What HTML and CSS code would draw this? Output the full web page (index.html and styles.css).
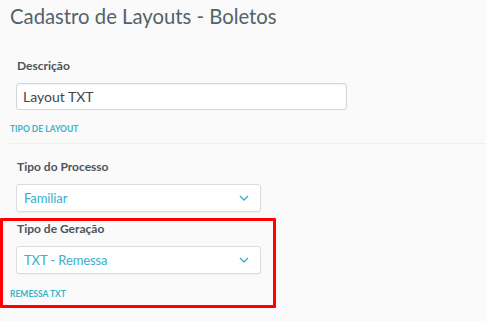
FILE: index.html
```html
<!DOCTYPE html>
<html lang="pt-BR">
<head>
  <meta charset="UTF-8" />
  <meta name="viewport" content="width=device-width, initial-scale=1" />
  <title>Cadastro de Layouts - Boletos</title>
  <link rel="stylesheet" href="styles.css">
</head>
<body>
  <main class="page">
    <h1 class="page-title">Cadastro de Layouts - Boletos</h1>

    <div class="field">
      <label for="descricao">Descrição</label>
      <input type="text" id="descricao" class="input-text" value="Layout TXT" />
    </div>
    <div class="section-title">TIPO DE LAYOUT</div>

    <hr class="divider" />

    <div class="field">
      <label>Tipo do Processo</label>
      <div class="select">
        <span>Familiar</span>
        <svg class="chevron" width="10" height="6" viewBox="0 0 10 6"><path d="M1 1l4 4 4-4" fill="none" stroke="#3aaecb" stroke-width="1.4"/></svg>
      </div>
    </div>

    <div class="highlight-group">
      <div class="field">
        <label>Tipo de Geração</label>
        <div class="select">
          <span>TXT - Remessa</span>
          <svg class="chevron" width="10" height="6" viewBox="0 0 10 6"><path d="M1 1l4 4 4-4" fill="none" stroke="#3aaecb" stroke-width="1.4"/></svg>
        </div>
      </div>
      <div class="section-title">REMESSA TXT</div>
      <div class="annotation"></div>
    </div>
  </main>
</body>
</html>
```

FILE: styles.css
```css
body {
  font-family: Lato, 'Open Sans', sans-serif;
  background-color: #fafafa;
  margin: 0;
  padding: 0;
  color: #4a5358;
}

.page {
  width: 486px;
  height: 321px;
  overflow: hidden;
}

.page-title {
  font-size: 20.3px;
  line-height: 24px;
  font-weight: 400;
  color: #52626a;
  margin: 4px 0 0 10px;
}

.field {
  padding-left: 16px;
}

.field label {
  display: block;
  font-size: 12px;
  line-height: 16px;
  font-weight: 700;
  color: #4c5559;
  padding-left: 1px;
}

.page-title + .field {
  margin-top: 30px;
}

.input-text {
  display: block;
  box-sizing: border-box;
  width: 331px;
  height: 27px;
  margin-top: 9px;
  padding: 0 6px;
  border: 1px solid #d6d6d6;
  border-radius: 3px;
  background: #fff;
  box-shadow: inset 0 1px 2px rgba(0, 0, 0, 0.06);
  font-family: inherit;
  font-size: 14px;
  color: #3f4448;
}

.section-title {
  font-size: 8.5px;
  line-height: 12px;
  font-weight: 700;
  color: #39b3c8;
  margin: 13px 0 0 10px;
}

.divider {
  border: none;
  border-top: 1px solid #efefef;
  margin: 8px 0 0 9px;
}

.divider + .field {
  margin-top: 15px;
}

.select {
  box-sizing: border-box;
  width: 245px;
  height: 28px;
  margin-top: 9px;
  padding: 0 11px 0 7px;
  display: flex;
  align-items: center;
  justify-content: space-between;
  border: 1px solid #dcdcdc;
  border-radius: 3px;
  background: #fff;
  box-shadow: 0 1px 1px rgba(0, 0, 0, 0.04);
  font-size: 13px;
  letter-spacing: -0.1px;
  color: #3aaecb;
}

.highlight-group {
  position: relative;
  margin-top: 9px;
  padding-bottom: 10px;
}

.highlight-group .section-title {
  margin-top: 14px;
}

.annotation {
  position: absolute;
  left: 0;
  top: -3px;
  width: 276px;
  height: 90px;
  box-sizing: border-box;
  border: 3px solid #ff0000;
  border-radius: 1px;
  pointer-events: none;
}
```
